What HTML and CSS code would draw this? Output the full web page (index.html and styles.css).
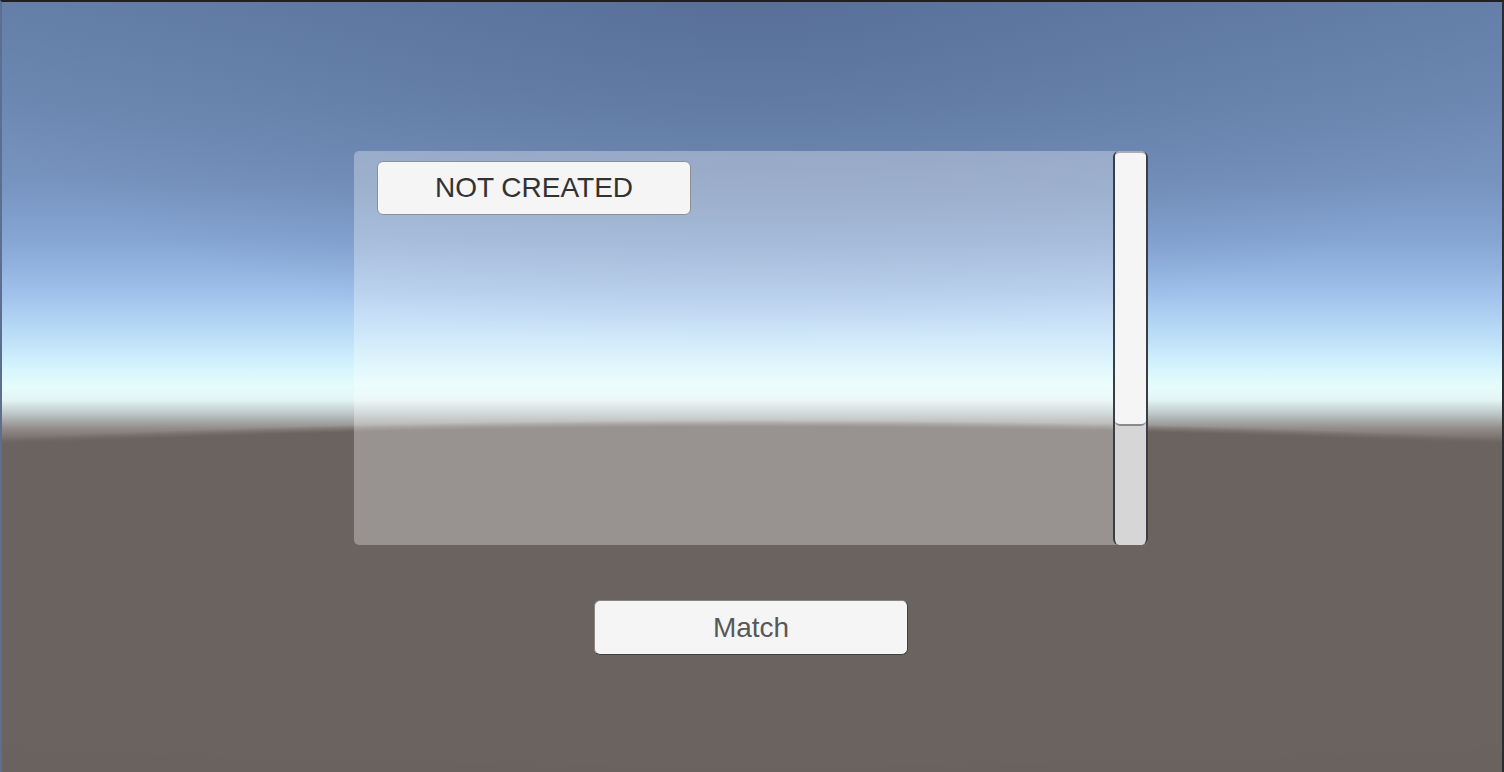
FILE: index.html
```html
<!DOCTYPE html>
<html>
<head>
<meta charset="utf-8">
<link rel="stylesheet" href="styles.css">
</head>
<body>
<div class="stage">
  <div class="scroll-panel">
    <div class="viewport">
      <button class="btn btn-item">NOT CREATED</button>
    </div>
    <div class="scrollbar">
      <div class="handle"></div>
    </div>
  </div>
  <button class="btn btn-match">Match</button>
</div>
</body>
</html>
```
FILE: styles.css
```css
html, body {
  margin: 0;
  padding: 0;
  width: 1504px;
  height: 772px;
  overflow: hidden;
  font-family: "Liberation Sans", Arial, sans-serif;
}

.stage {
  box-sizing: border-box;
  width: 1504px;
  height: 772px;
  border-top: 2px solid #202022;
  border-left: 2px solid #5d6f8e;
  border-right: 2px solid #2c2c2e;
  display: flex;
  flex-direction: column;
  align-items: center;
  padding-top: 149px;
  padding-right: 2px;
  background:
    radial-gradient(1700px 175px at 50% 593px, #6b635f 0%, #6b635f 96%, rgba(107,99,95,0) 100%),
    linear-gradient(to bottom, rgba(107,99,95,0) 0, rgba(107,99,95,0) 560px, #6a625e 580px, #6a625e 100%),
    radial-gradient(ellipse 55% 45% at 50% 0%, rgba(72,92,130,0.45), rgba(72,92,130,0) 100%),
    linear-gradient(to bottom,
      #6580aa 0px,
      #6d89b3 100px,
      #7794c0 180px,
      #86a6d4 240px,
      #9ec0ea 290px,
      #bcdff8 335px,
      #d4f4fc 365px,
      #e6fcfb 385px,
      #e2f4f3 398px,
      #bcc6c6 412px,
      #938e8c 426px,
      #6b635f 442px,
      #6a625e 100%);
}

.scroll-panel {
  width: 794px;
  height: 394px;
  display: flex;
  border-radius: 5px;
  background: rgba(255, 255, 255, 0.31);
}

.viewport {
  flex: 1;
  padding: 10px 0 0 23px;
}

.btn {
  box-sizing: border-box;
  width: 314px;
  height: 55px;
  border-radius: 6px;
  background: #f5f5f5;
  font-family: "Liberation Sans", Arial, sans-serif;
  font-size: 28px;
  padding: 0;
  display: flex;
  align-items: center;
  justify-content: center;
}

.btn-item {
  height: 54px;
  color: #323232;
  border: 1px solid #8c8f96;
}

.btn-match {
  margin-top: 55px;
  color: #585858;
  border: 1px solid #8a8580;
  border-right-color: #45403d;
  border-bottom-color: #45403d;
}

.scrollbar {
  box-sizing: border-box;
  width: 35px;
  height: 394px;
  border-left: 2px solid #3b3e46;
  border-right: 2px solid #3b3e46;
  border-radius: 6px;
  background: #d6d6d6;
  display: flex;
  flex-direction: column;
  overflow: hidden;
}

.handle {
  box-sizing: border-box;
  height: 275px;
  background: #f5f5f5;
  border-top: 2px solid #a8adb5;
  border-bottom: 2px solid #8a8a8a;
  border-radius: 5px;
}
```
